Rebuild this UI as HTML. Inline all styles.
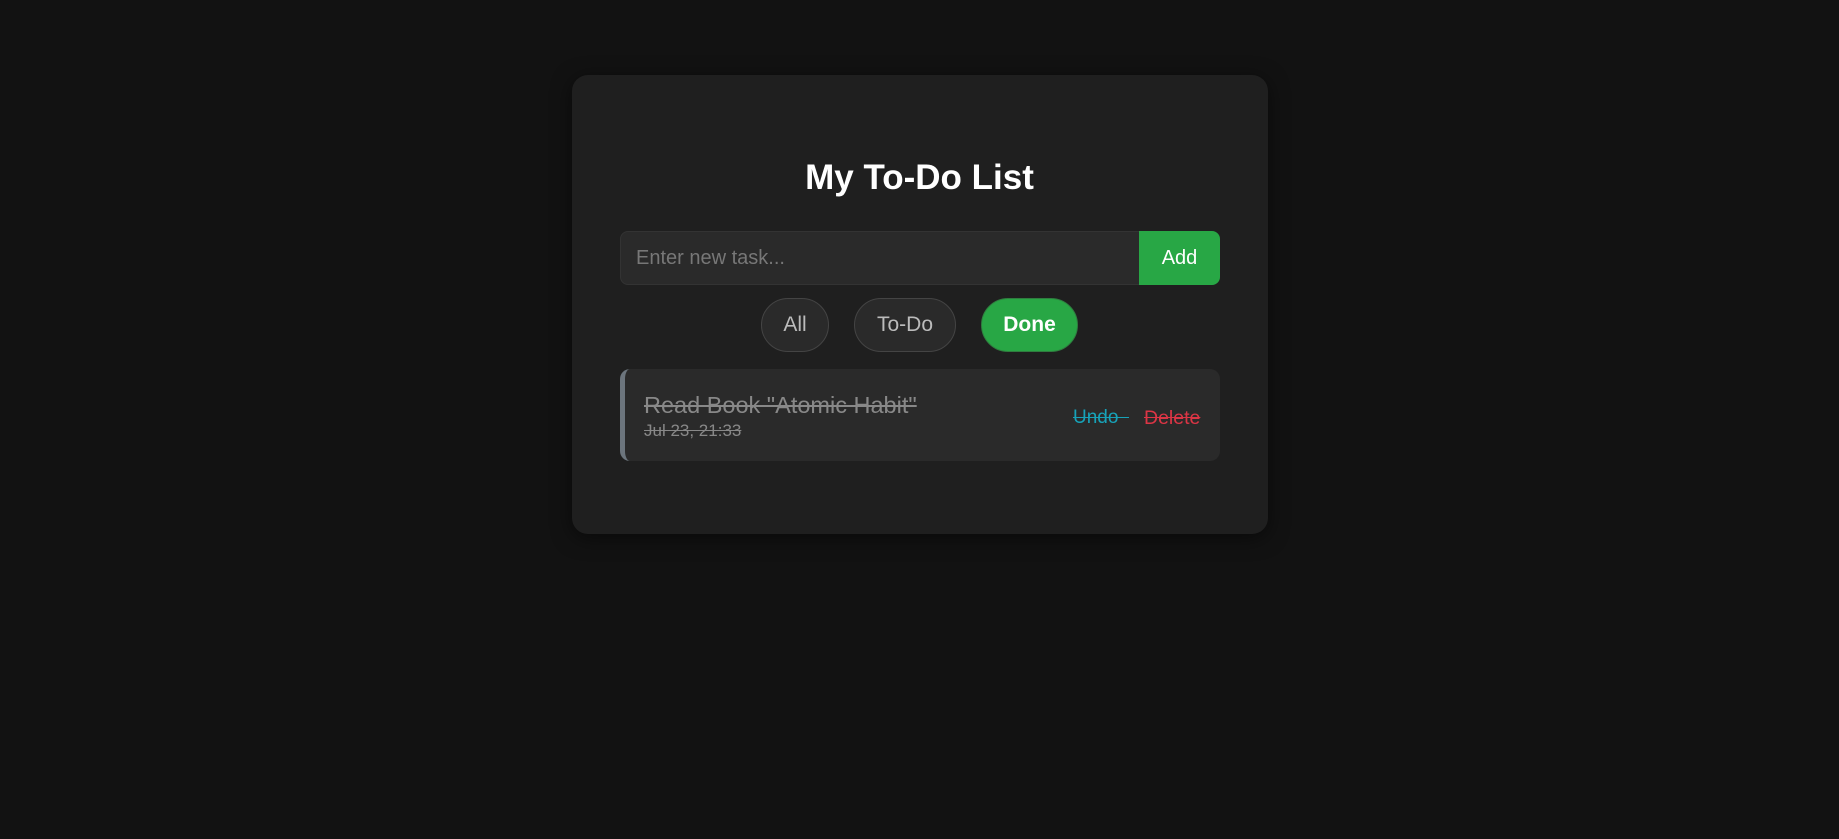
<!DOCTYPE html>
<html><head><meta charset="utf-8"><style>
*{box-sizing:border-box;margin:0;padding:0}
body{width:1839px;height:839px;background:#121212;font-family:"Liberation Sans",sans-serif;position:relative;overflow:hidden}
.card{position:absolute;left:572px;top:75px;width:696px;height:459px;background:#1f1f1f;border-radius:16px;box-shadow:0 4px 20px rgba(0,0,0,.5)}
h1{position:absolute;left:0;width:100%;top:158px;text-align:center;color:#fff;font-size:35px;font-weight:bold;line-height:40px}
.inp{position:absolute;left:620px;top:231px;width:520px;height:54px;background:#2a2a2a;border:1px solid #333;border-radius:8px 0 0 8px;color:#777;font-size:20px;padding-left:15px;line-height:52px}
.add{position:absolute;left:1139px;top:231px;width:81px;height:54px;background:#28a745;border-radius:0 8px 8px 0;color:#fff;font-size:20px;text-align:center;line-height:54px}
.f{position:absolute;top:298px;height:54px;border:1px solid #444;border-radius:27px;background:#2a2a2a;color:#bbb;font-size:21px;text-align:center;line-height:52px}
.done{background:#28a745;color:#fff;font-weight:bold;border-color:#2f7d3f}
.item{position:absolute;left:620px;top:369px;width:600px;height:92px;background:#2a2a2a;border-radius:10px;border-left:5px solid #6c757d}
.t{position:absolute;left:19px;top:23px;color:#888;font-size:23.5px;text-decoration:line-through}
.d{position:absolute;left:19px;top:52px;color:#888;font-size:17px;text-decoration:line-through}
.u{position:absolute;left:448px;top:38px;color:#17a2b8;font-size:19px;text-decoration:line-through;white-space:pre}
.x{position:absolute;left:519px;top:38px;color:#dc3545;font-size:19.5px;text-decoration:line-through}
</style></head><body>
<div class="card"></div>
<h1>My To-Do List</h1>
<div class="inp">Enter new task...</div>
<div class="add">Add</div>
<div class="f" style="left:761px;width:68px">All</div>
<div class="f" style="left:854px;width:102px">To-Do</div>
<div class="f done" style="left:981px;width:97px">Done</div>
<div class="item">
<div class="t">Read Book "Atomic Habit"</div>
<div class="d">Jul 23, 21:33</div>
<div class="u">Undo  </div>
<div class="x">Delete</div>
</div>
</body></html>
